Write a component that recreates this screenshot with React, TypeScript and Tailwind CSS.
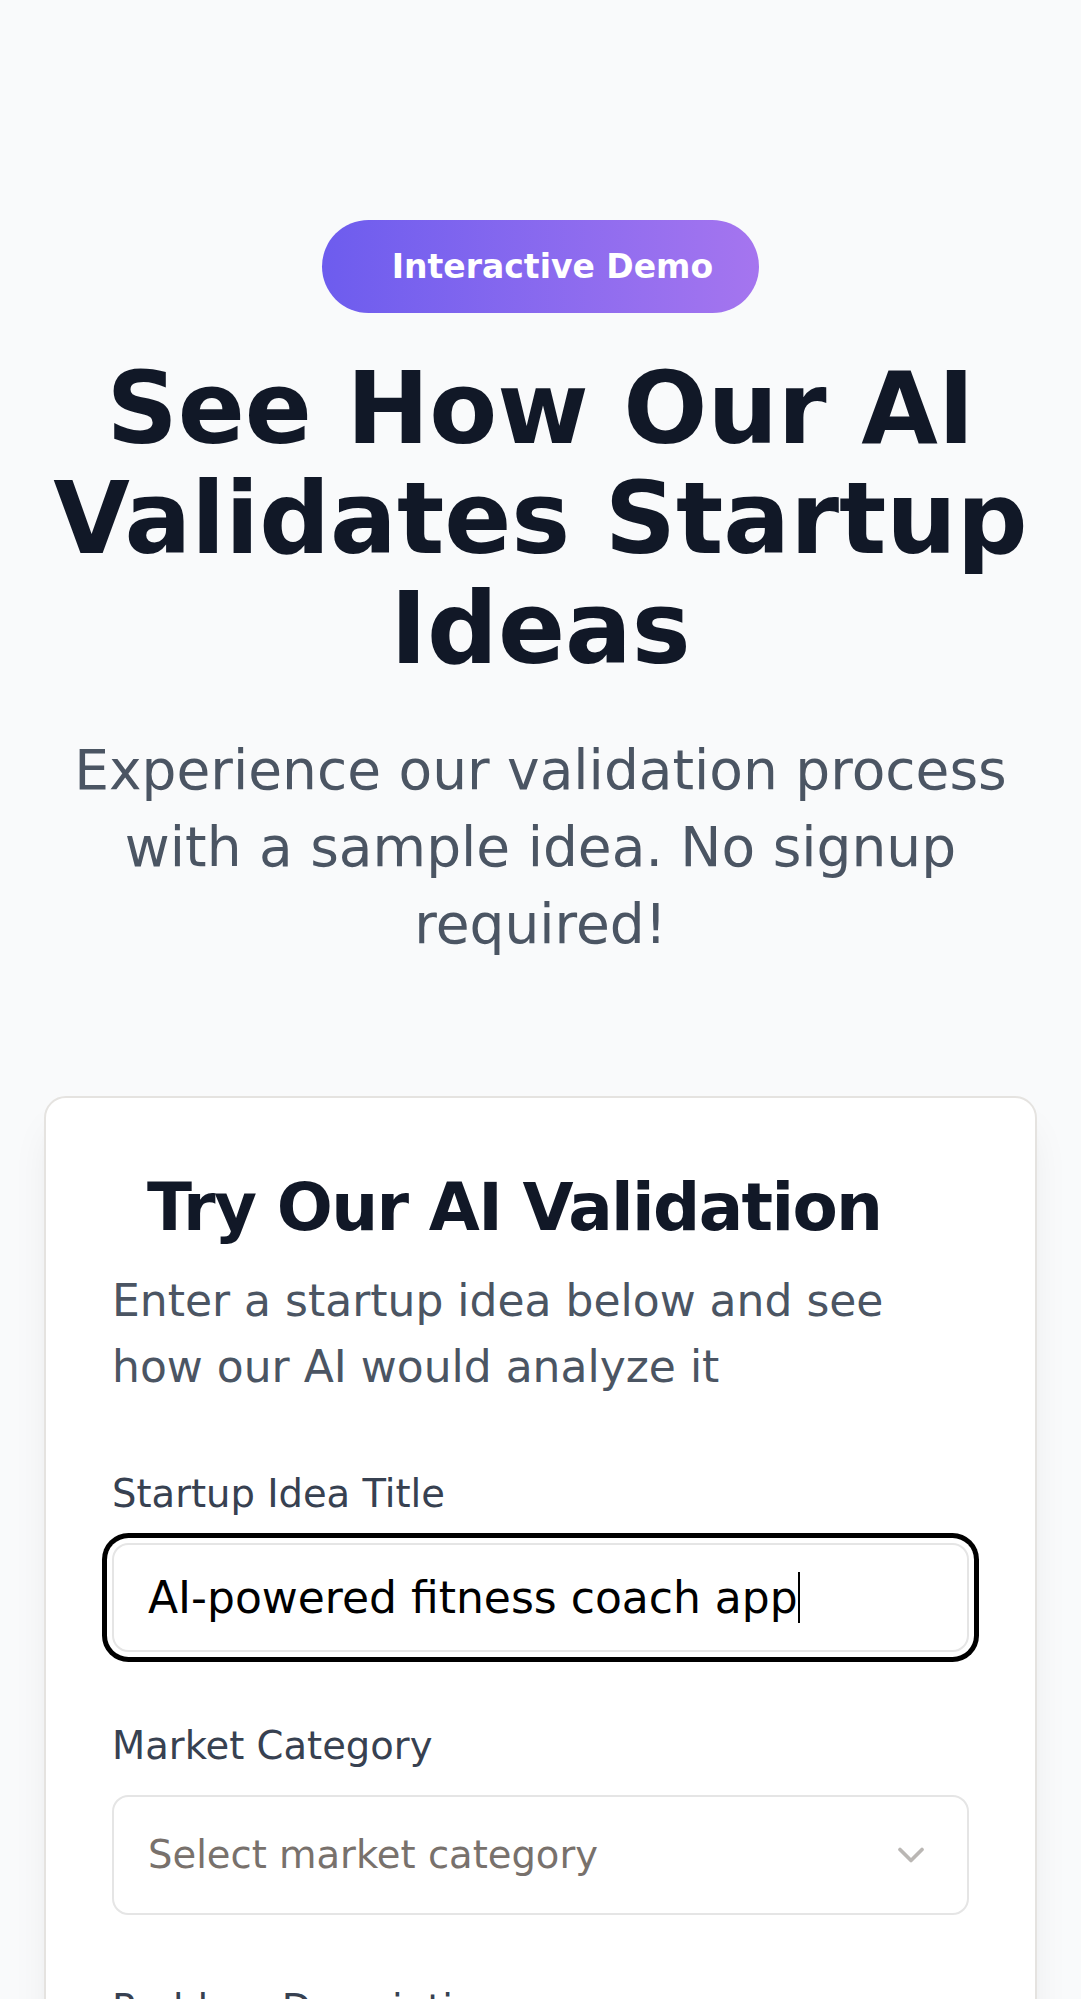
import { ChevronDown } from 'lucide-react'

const fields = [
  { label: 'Startup Idea Title' },
  { label: 'Market Category' },
  { label: 'Problem Description' },
]

export default function App() {
  return (
    <div className="min-h-screen bg-[#f9fafb] font-['DejaVu_Sans',sans-serif]">
      <section className="px-[44px] pt-[220px] pb-[132px]">
        {/* Intro */}
        <div className="flex flex-col items-center text-center">
          <span className="inline-flex h-[93px] items-center rounded-full bg-linear-to-r from-[#6d5cee] to-[#a575ef] pl-[70px] pr-[46px] text-[33px] leading-[44px] font-bold text-white">
            Interactive Demo
          </span>
          <h1 className="mt-[41px] text-[99px] leading-[110px] font-bold text-[#111827]">
            See How Our AI Validates Startup Ideas
          </h1>
          <p className="mt-[48px] text-[55px] leading-[77px] text-[#4b5563]">
            Experience our validation process with a sample idea. No signup required!
          </p>
        </div>

        {/* Demo card */}
        <div className="mt-[133px] rounded-[22px] border-[2.75px] border-[#e5e3e0] bg-white shadow-[0_27px_41px_-8px_rgba(0,0,0,0.08),0_11px_16px_-11px_rgba(0,0,0,0.08)]">
          <div className="p-[66px]">
            <h2 className="ml-[35px] text-[66px] leading-[88px] font-bold tracking-[-1.65px] text-[#111827]">
              Try Our AI Validation
            </h2>
            <p className="mt-[16px] text-[44px] leading-[66px] text-[#4b5563]">
              Enter a startup idea below and see how our AI would analyze it
            </p>
          </div>

          <div className="flex flex-col gap-[66px] px-[66px] pb-[66px]">
            <div className="flex flex-col gap-[22px]">
              <label className="text-[38.5px] leading-[55px] text-[#374151]">{fields[0].label}</label>
              <div className="flex h-[109px] items-center rounded-[16.5px] border-[2.75px] border-[#e5e5e5] bg-white px-[34px] text-[44px] text-black shadow-[0_0_0_5px_#fff,0_0_0_10px_#000]">
                <span>AI-powered fitness coach app</span>
                <span className="h-[51px] w-[2px] bg-black" />
              </div>
            </div>

            <div className="flex flex-col gap-[22px]">
              <label className="text-[38.5px] leading-[55px] text-[#374151]">{fields[1].label}</label>
              <div className="flex h-[120px] items-center justify-between rounded-[16.5px] border-[2.75px] border-[#e5e5e5] bg-white px-[34px] text-[38.5px] text-[#78716c]">
                <span>Select market category</span>
                <ChevronDown size={44} strokeWidth={2} className="text-[#78716c] opacity-50" />
              </div>
            </div>

            <div className="flex flex-col gap-[22px]">
              <label className="text-[38.5px] leading-[55px] text-[#374151]">{fields[2].label}</label>
              <div className="h-[220px] rounded-[16.5px] border-[2.75px] border-[#e5e5e5] bg-white px-[34px] py-[22px] text-[38.5px] text-[#78716c]">
                Describe the problem your startup solves
              </div>
            </div>

            <button className="h-[121px] rounded-[16.5px] bg-linear-to-r from-[#6d5cee] to-[#a575ef] text-[44px] font-bold text-white">
              Validate My Idea
            </button>
          </div>
        </div>
      </section>
    </div>
  )
}
